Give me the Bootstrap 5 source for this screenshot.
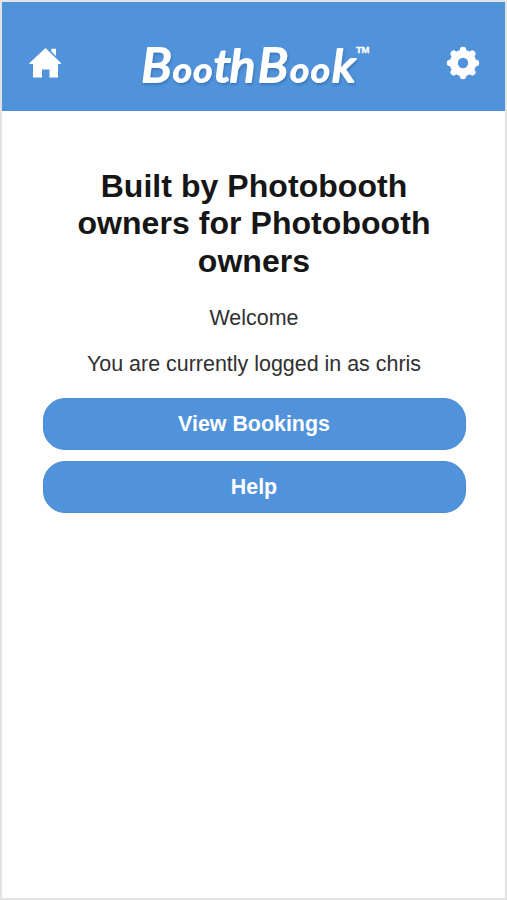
<!DOCTYPE html>
<html lang="en">
<head>
<meta charset="utf-8">
<meta name="viewport" content="width=device-width, initial-scale=1">
<title>BoothBook</title>
<link href="https://cdn.jsdelivr.net/npm/bootstrap@5.3.0/dist/css/bootstrap.min.css" rel="stylesheet">
<style>
  body { font-family: "Liberation Sans", Arial, sans-serif; font-size: 21.45px; color: #303030; background: #fefefe; }
  .app-frame { height: 100vh; border: 2px solid #e3e3e3; overflow: hidden; }
  .app-bar { height: 109px; background: #5093da; padding: 12px 25.5px 0 26px; }
  .app-bar svg { display: block; }
  .wordmark { font-family: Lato, sans-serif; font-style: italic; font-weight: 400; filter: drop-shadow(1px 2px 1px rgba(35, 85, 145, .4)); }
  .app-main { padding: 56.5px 39.5px 0 40.5px; }
  .app-title { font-size: 32px; line-height: 37.5px; font-weight: 700; letter-spacing: .05px; color: #161616; margin: 0 20px 21.5px; }
  .app-main p { line-height: 32px; margin-bottom: 14px; }
  .app-btn { --bs-btn-color: #fff; --bs-btn-bg: #5093da; --bs-btn-border-color: #4a8dd4; --bs-btn-hover-color: #fff; --bs-btn-hover-bg: #4384cb;
    --bs-btn-font-size: 21.4px; --bs-btn-font-weight: 700; --bs-btn-border-radius: 22px; height: 52px; line-height: 38px; }
  .app-actions { gap: 11px; margin-top: 18px; }
</style>
<script src="https://cdn.jsdelivr.net/npm/bootstrap@5.3.0/dist/js/bootstrap.bundle.min.js"></script>
</head>
<body>
<div class="app-frame">
  <header class="app-bar d-flex align-items-center justify-content-between">
    <a href="#" aria-label="Home">
      <svg width="34" height="34" viewBox="0 0 34 34" fill="#fff"><path d="M17.500 2 33 17v1H30v13.500H21.500V23.500H14v8H5V18H1.500v-1Z"/><path d="M23.300 2.800h4.700v7.200l-4.700-4.600Z"/></svg>
    </a>
    <a href="#" aria-label="BoothBook">
      <svg width="240" height="60" viewBox="0 0 240 60" fill="#fff" stroke="#fff" stroke-linejoin="round">
        <text class="wordmark" transform="scale(1.1 1)" y="49.500" stroke-width="2"><tspan x="6.500" font-size="46">B</tspan><tspan x="35.500 54" font-size="33">oo</tspan><tspan x="72.500 87" font-size="44">th</tspan><tspan x="112.500" font-size="46">B</tspan><tspan x="142 161" font-size="33">oo</tspan><tspan x="180" font-size="45">k</tspan></text>
        <text x="222" y="19.500" font-family="Liberation Sans, Arial, sans-serif" font-weight="700" font-size="9.500" stroke-width=".3" textLength="13.500">TM</text>
      </svg>
    </a>
    <a href="#" aria-label="Settings">
      <svg width="34" height="34" viewBox="-17 -17 34 34">
        <circle r="9.200" fill="none" stroke="#fff" stroke-width="8"/>
        <g stroke="#fff" stroke-width="6.400" stroke-linecap="round"><path d="M0-11v-2M0 11v2M-11 0h-2M11 0h2M-7.800-7.800l-1.500-1.500M7.800-7.800l1.500-1.500M-7.800 7.800l-1.500 1.500M7.800 7.800l1.500 1.500"/></g>
      </svg>
    </a>
  </header>
  <main class="app-main text-center">
    <h1 class="app-title">Built by Photobooth owners for Photobooth owners</h1>
    <p>Welcome</p>
    <p>You are currently logged in as chris</p>
    <div class="app-actions d-grid">
      <a href="#" class="btn app-btn">View Bookings</a>
      <a href="#" class="btn app-btn">Help</a>
    </div>
  </main>
</div>
</body>
</html>
